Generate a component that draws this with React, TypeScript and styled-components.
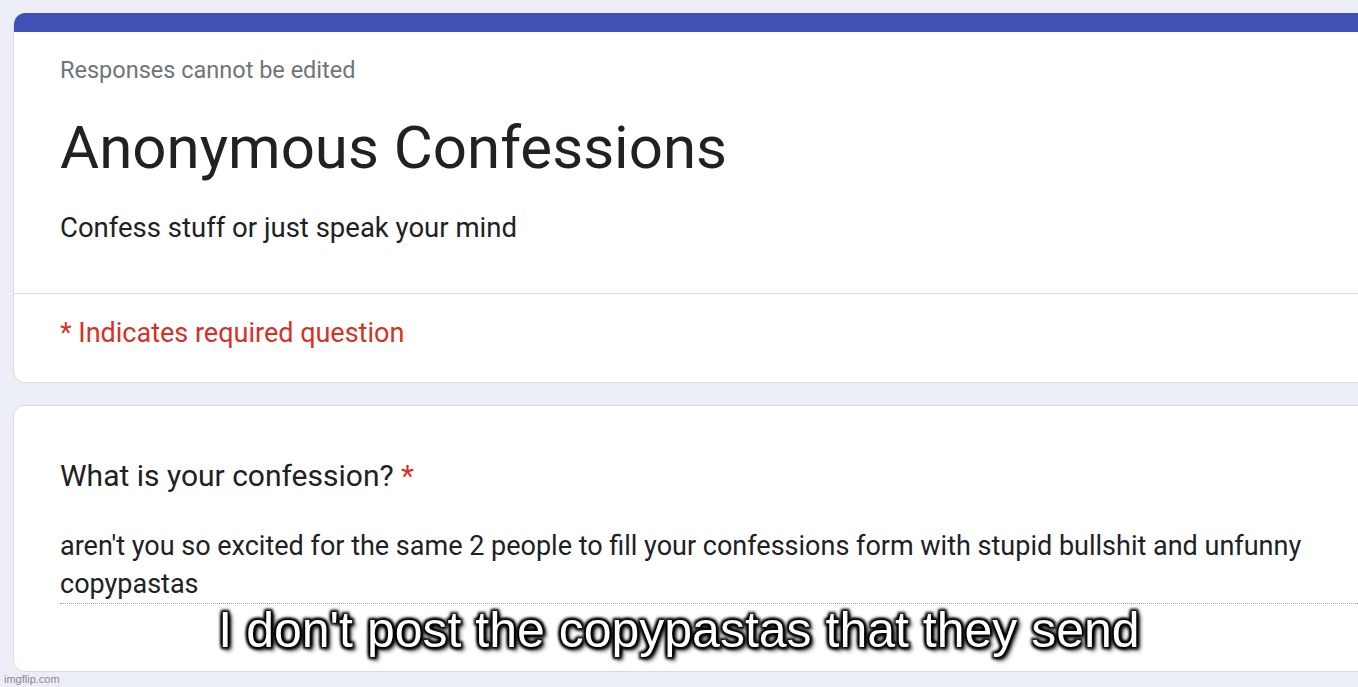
import React from "react";
import styled, { createGlobalStyle } from "styled-components";

const GlobalStyle = createGlobalStyle`
  html, body {
    margin: 0;
    padding: 0;
    background: #ebedf7;
    overflow: hidden;
  }
  body {
    width: 1358px;
    height: 687px;
    font-family: Roboto, "Liberation Sans", sans-serif;
  }
`;

const Page = styled.div`
  position: relative;
  width: 1358px;
  height: 687px;
  padding: 13px 0 0 13px;
  box-sizing: border-box;
  display: flex;
  flex-direction: column;
  gap: 22px;
  overflow: hidden;
`;

const Card = styled.div<{ $accent?: boolean }>`
  width: 1400px;
  background: #fff;
  border: 1px solid #dadce0;
  border-radius: 12px;
  box-sizing: border-box;
  overflow: hidden;
  ${(p) => (p.$accent ? "border-top: none;" : "")}
`;

const TopBar = styled.div`
  height: 19px;
  background: #3f51b5;
`;

const Section = styled.div<{ $pt: number; $pb: number }>`
  padding: ${(p) => p.$pt}px 0 ${(p) => p.$pb}px 46px;
`;

const Note = styled.div`
  font-size: 23.5px;
  line-height: 28px;
  color: #70757a;
`;

const Title = styled.h1`
  margin: 32px 0 0;
  font-size: 60px;
  line-height: 64px;
  font-weight: 400;
  color: #202124;
`;

const Description = styled.p`
  margin: 32px 0 0;
  font-size: 27.5px;
  line-height: 32px;
  color: #202124;
`;

const Divider = styled.div`
  height: 1px;
  background: #dadce0;
`;

const Required = styled.div`
  font-size: 27px;
  line-height: 28px;
  color: #d93025;
`;

const Question = styled.div`
  font-size: 30px;
  line-height: 32px;
  color: #202124;
`;

const Star = styled.span`
  color: #d93025;
`;

const Answer = styled.div`
  margin-top: 36px;
  font-size: 27px;
  line-height: 37.5px;
  color: #202124;
  padding-right: 100px;
  border-bottom: 1px dotted #9aa0a6;
`;

const Caption = styled.div`
  position: absolute;
  left: 0;
  right: 0;
  top: 601px;
  text-align: center;
  font-family: "Liberation Sans", Arial, sans-serif;
  font-size: 50px;
  line-height: 58px;
  color: #fff;
  text-shadow:
    0 0 2px #000, 0 0 3px #000, 0 0 4px #000,
    2px 2px 3px #000, -2px -2px 3px #000, 2px -2px 3px #000, -2px 2px 3px #000,
    3px 3px 5px #000;
`;

const Watermark = styled.div`
  position: absolute;
  left: 4px;
  bottom: 2px;
  font-family: "Liberation Sans", Arial, sans-serif;
  font-size: 11px;
  color: #8a8a8a;
`;

export default function App() {
  return (
    <>
      <GlobalStyle />
      <Page>
        <Card $accent>
          <TopBar />
          <Section $pt={24} $pb={49}>
            <Note>Responses cannot be edited</Note>
            <Title>Anonymous Confessions</Title>
            <Description>Confess stuff or just speak your mind</Description>
          </Section>
          <Divider />
          <Section $pt={25} $pb={35}>
            <Required>* Indicates required question</Required>
          </Section>
        </Card>
        <Card>
          <Section $pt={54} $pb={67}>
            <Question>
              What is your confession? <Star>*</Star>
            </Question>
            <Answer>
              aren't you so excited for the same 2 people to fill your confessions form with stupid
              bullshit and unfunny copypastas
            </Answer>
          </Section>
        </Card>
        <Caption>I don't post the copypastas that they send</Caption>
        <Watermark>imgflip.com</Watermark>
      </Page>
    </>
  );
}
